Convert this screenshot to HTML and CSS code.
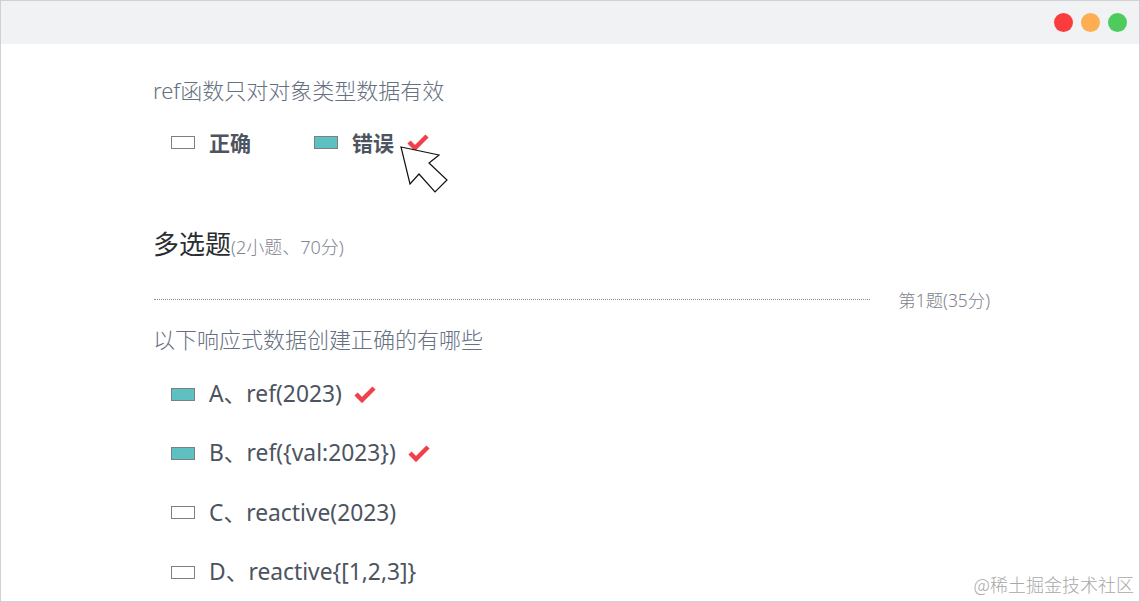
FILE: index.html
```html
<!DOCTYPE html>
<html lang="zh-CN">
<head>
	<meta charset="UTF-8">
	<title>多选题</title>
	<link rel="stylesheet" href="styles.css">
</head>
<body>
	<div class="window">
		<header class="titlebar">
			<span class="dot dot-red"></span>
			<span class="dot dot-orange"></span>
			<span class="dot dot-green"></span>
		</header>
		<main class="paper">
			<p class="question first">ref函数只对对象类型数据有效</p>
			<ul class="judge">
				<li class="judge-item">
					<span class="box"></span>
					<span class="judge-label">正确</span>
				</li>
				<li class="judge-item">
					<span class="box checked"></span>
					<span class="judge-label">错误</span>
					<svg class="tick" viewBox="0 0 22 18"><path d="M2 9l6 6L20 3" /></svg>
				</li>
			</ul>
			<h2 class="section-title">多选题<small>(2小题、70分)</small></h2>
			<div class="divider">
				<span class="divider-line"></span>
				<span class="divider-text">第1题(35分)</span>
			</div>
			<p class="question">以下响应式数据创建正确的有哪些</p>
			<ul class="options">
				<li class="option">
					<span class="box checked"></span>
					<span>A、ref(2023)</span>
					<svg class="tick" viewBox="0 0 22 18"><path d="M2 9l6 6L20 3" /></svg>
				</li>
				<li class="option">
					<span class="box checked"></span>
					<span>B、ref({val:2023})</span>
					<svg class="tick" viewBox="0 0 22 18"><path d="M2 9l6 6L20 3" /></svg>
				</li>
				<li class="option">
					<span class="box"></span>
					<span>C、reactive(2023)</span>
				</li>
				<li class="option">
					<span class="box"></span>
					<span>D、reactive{[1,2,3]}</span>
				</li>
			</ul>
		</main>
		<svg class="cursor" viewBox="0 0 50 50">
			<path d="M2 2L40 10L30 18L48 35L36 47L20 29L11 39Z" />
		</svg>
		<span class="watermark">@稀土掘金技术社区</span>
	</div>
</body>
</html>
```

FILE: styles.css
```css
* {
	box-sizing: border-box;
}
html, body {
	height: 100%;
	margin: 0;
}
body {
	font-family: "Noto Sans", "Noto Sans CJK SC", sans-serif;
	background: #fff;
	overflow: hidden;
}
ul {
	list-style: none;
	margin: 0;
	padding: 0;
}
.window {
	border: 1px solid #cfd1d4;
	height: 602px;
	overflow: hidden;
	position: relative;
	width: 1140px;
}
.titlebar {
	align-items: center;
	background: #f1f2f4;
	display: flex;
	gap: 8px;
	height: 43px;
	justify-content: flex-end;
	padding-right: 12px;
}
.dot {
	border-radius: 50%;
	height: 19px;
	width: 19px;
}
.dot-red { background: #fb3c3f; }
.dot-orange { background: #feae52; }
.dot-green { background: #4dcb5c; }

.paper {
	padding-left: 153px;
	padding-right: 149px;
}
.question {
	color: #667080;
	font-size: 22px;
	font-weight: 300;
	line-height: 30px;
	margin: 12px 0 0;
	text-indent: -1px;
}
.question.first {
	margin: 0;
	padding-top: 31px;
}
.judge {
	display: flex;
	gap: 63px;
	margin-top: 22px;
	padding-left: 17px;
}
.judge-item, .option {
	align-items: center;
	display: flex;
}
.judge-label {
	color: #4c5460;
	font-size: 21px;
	font-weight: 700;
	margin-left: 14px;
}
.box {
	background: #fff;
	border: 1px solid #7d7f82;
	height: 13px;
	width: 24px;
}
.box.checked {
	background: #5cc1c0;
}
.tick {
	fill: none;
	height: 18px;
	margin-left: 13px;
	stroke: #f0414a;
	stroke-width: 4.5;
	width: 22px;
}
.section-title {
	color: #2b2d30;
	font-size: 26px;
	font-weight: 400;
	line-height: 36px;
	margin: 69px 0 0;
	text-indent: -1px;
}
.section-title small {
	color: #7f8691;
	font-size: 18px;
	font-weight: 300;
}
.divider {
	align-items: center;
	display: flex;
	margin-top: 22px;
}
.divider-line {
	border-top: 1px dotted #8a8a8a;
	flex: 1;
}
.divider-text {
	color: #7d838c;
	font-size: 17.4px;
	font-weight: 300;
	margin-left: 28px;
}
.options {
	display: flex;
	flex-direction: column;
	gap: 27.4px;
	margin-top: 24px;
	padding-left: 17px;
}
.option {
	color: #4c5460;
	font-size: 22.8px;
	gap: 14px;
	line-height: 32px;
}
.option .tick {
	margin-left: -2px;
}
.cursor {
	fill: #fff;
	height: 52px;
	left: 398px;
	position: absolute;
	stroke: #111;
	stroke-width: 1.2;
	top: 143px;
	width: 50px;
}
.watermark {
	bottom: 4px;
	color: #a8a8a8;
	font-family: "Noto Sans CJK SC", sans-serif;
	font-size: 18px;
	font-weight: 300;
	position: absolute;
	right: 5px;
}
```
